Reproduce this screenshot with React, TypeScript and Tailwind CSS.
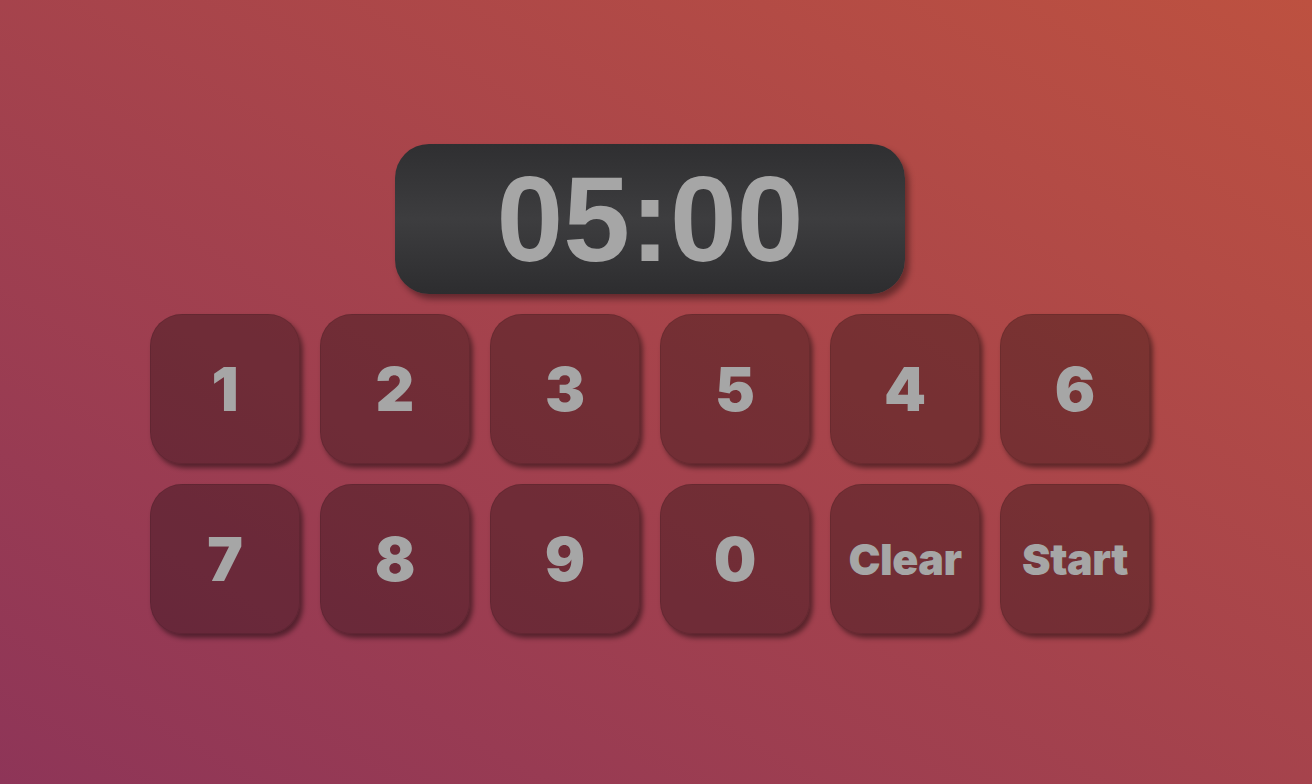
const KEYS = ['1', '2', '3', '5', '4', '6', '7', '8', '9', '0', 'Clear', 'Start'];

export default function App() {
  return (
    <div className="min-h-[784px] w-full bg-[linear-gradient(to_top_right,#8e3558,#bd5140)] font-['Inter','Liberation_Sans',sans-serif]">
      <div className="ml-[150px] flex w-[1000px] flex-col items-center gap-5 pt-[144px]">
        {/* timer display */}
        <div className="flex h-[150px] w-[510px] items-center justify-center rounded-[34px] bg-[linear-gradient(to_bottom,#2f2f31,#3d3d3f_50%,#2d2d2f)] shadow-[4px_5px_6px_rgba(0,0,0,0.4)]">
          <span className="font-['Liberation_Sans',Arial,sans-serif] text-[120px] leading-none font-bold text-[#a6a6a6]">
            05:00
          </span>
        </div>

        {/* keypad */}
        <div className="grid grid-cols-6 gap-5">
          {KEYS.map((k) => (
            <button
              key={k}
              className={
                'flex h-[150px] w-[150px] items-center justify-center rounded-[32px] border border-black/10 bg-black/30 font-black text-[#a6a6a6] shadow-[3px_4px_5px_rgba(0,0,0,0.45)] ' +
                (k.length > 1 ? 'text-[43px] tracking-[-0.5px]' : 'text-[60px]')
              }
            >
              {k}
            </button>
          ))}
        </div>
      </div>
    </div>
  );
}
